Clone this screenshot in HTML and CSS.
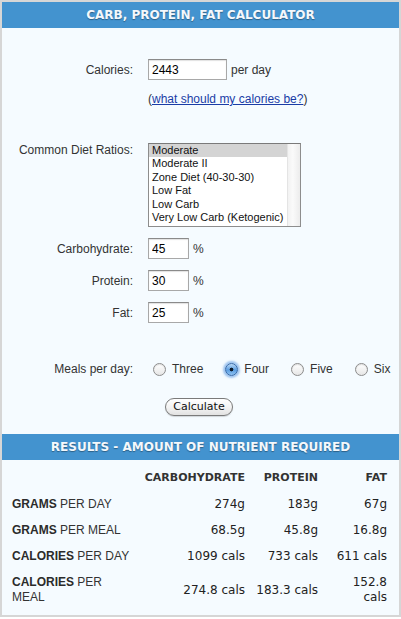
FILE: index.html
```html
<!DOCTYPE html>
<html>
<head>
<meta charset="utf-8">
<link rel="stylesheet" href="styles.css">
</head>
<body>
<div class="calc">
  <div class="bar">CARB, PROTEIN, FAT CALCULATOR</div>
  <div class="form">
    <div class="row r-cal">
      <label class="lbl">Calories:</label>
      <div class="ctl"><input class="txt w-cal" value="2443"><span class="unit">per day</span></div>
    </div>
    <div class="row r-link">
      <span class="lbl"></span>
      <div class="ctl">(<a href="#" class="link">what should my calories be?</a>)</div>
    </div>
    <div class="row r-diet">
      <label class="lbl">Common Diet Ratios:</label>
      <div class="listbox">
        <ul class="opts">
          <li class="sel">Moderate</li>
          <li>Moderate II</li>
          <li>Zone Diet (40-30-30)</li>
          <li>Low Fat</li>
          <li>Low Carb</li>
          <li>Very Low Carb (Ketogenic)</li>
        </ul>
        <div class="sbar"></div>
      </div>
    </div>
    <div class="row r-pct">
      <label class="lbl">Carbohydrate:</label>
      <div class="ctl"><input class="txt w-pct" value="45"><span class="unit">%</span></div>
    </div>
    <div class="row r-pct">
      <label class="lbl">Protein:</label>
      <div class="ctl"><input class="txt w-pct" value="30"><span class="unit">%</span></div>
    </div>
    <div class="row r-pct">
      <label class="lbl">Fat:</label>
      <div class="ctl"><input class="txt w-pct" value="25"><span class="unit">%</span></div>
    </div>
    <div class="row r-meals">
      <label class="lbl">Meals per day:</label>
      <div class="radios">
        <label class="opt"><input type="radio" name="m" class="rad"><span>Three</span></label>
        <label class="opt"><input type="radio" name="m" class="rad" checked><span>Four</span></label>
        <label class="opt"><input type="radio" name="m" class="rad"><span>Five</span></label>
        <label class="opt"><input type="radio" name="m" class="rad"><span>Six</span></label>
      </div>
    </div>
    <div class="btnrow"><button class="btn" type="button">Calculate</button></div>
  </div>
  <div class="bar">RESULTS - AMOUNT OF NUTRIENT REQUIRED</div>
  <div class="results">
    <div class="cell head"></div>
    <div class="cell head num">CARBOHYDRATE</div>
    <div class="cell head num">PROTEIN</div>
    <div class="cell head num">FAT</div>

    <div class="cell rl"><b>GRAMS</b> PER DAY</div>
    <div class="cell num v">274g</div>
    <div class="cell num v">183g</div>
    <div class="cell num v">67g</div>

    <div class="cell rl"><b>GRAMS</b> PER MEAL</div>
    <div class="cell num v">68.5g</div>
    <div class="cell num v">45.8g</div>
    <div class="cell num v">16.8g</div>

    <div class="cell rl"><b>CALORIES</b> PER DAY</div>
    <div class="cell num v">1099 cals</div>
    <div class="cell num v">733 cals</div>
    <div class="cell num v">611 cals</div>

    <div class="cell rl two">
      <div><b>CALORIES</b> PER</div>
      <div>MEAL</div>
    </div>
    <div class="cell num v two">274.8 cals</div>
    <div class="cell num v two">183.3 cals</div>
    <div class="cell num v two">152.8 cals</div>
  </div>
</div>
</body>
</html>
```

FILE: styles.css
```css
html, body {
  margin: 0;
  padding: 0;
  background: #ffffff;
}

.calc {
  box-sizing: border-box;
  width: 401px;
  height: 617px;
  border: 2px solid #d6d6d6;
  background: #f5fbff;
  font-family: "Liberation Sans", Arial, sans-serif;
  font-size: 12px;
  color: #333333;
}

.bar {
  height: 26px;
  line-height: 26px;
  background: #4393cf;
  color: #f4f8fc;
  text-align: center;
  font-family: "DejaVu Sans", Verdana, sans-serif;
  font-weight: bold;
  font-size: 12px;
  text-shadow: 0 1px 1px rgba(0, 0, 0, 0.35);
}

.form {
  padding-top: 31px;
  padding-bottom: 18px;
}

.row {
  display: flex;
  align-items: center;
  gap: 15px;
}

.lbl {
  width: 131px;
  flex: none;
  text-align: right;
  line-height: 14px;
}

.ctl {
  display: flex;
  align-items: center;
  line-height: 14px;
}

.r-cal { height: 21px; }
.r-link { margin-top: 12px; height: 14px; }
.r-diet { margin-top: 37px; align-items: flex-start; }
.r-pct { margin-top: 11px; height: 21px; }
.r-meals { margin-top: 38px; height: 16px; }

.txt {
  box-sizing: border-box;
  height: 21px;
  margin: 0;
  padding: 0 3px;
  border: 1px solid #a8a8a8;
  border-top-color: #8a8a8a;
  box-shadow: inset 0 1px 1px rgba(0, 0, 0, 0.12);
  background: #ffffff;
  font-family: "Liberation Sans", Arial, sans-serif;
  font-size: 12px;
  color: #000000;
  outline: none;
}

.w-cal { width: 79px; }
.w-pct { width: 41px; }

.unit { margin-left: 4px; }

.link {
  color: #1a3ca6;
  text-decoration: underline;
}

.listbox {
  box-sizing: border-box;
  width: 153px;
  height: 84px;
  border: 1px solid #8d8d8d;
  border-top-color: #7a7a7a;
  background: #ffffff;
  display: flex;
}

.opts {
  list-style: none;
  margin: 0;
  padding: 0;
  flex: 1;
  font-size: 11px;
  line-height: 13.4px;
  color: #111111;
}

.opts li {
  padding-left: 3px;
  white-space: nowrap;
}

.opts li.sel {
  background: #d4d4d4;
}

.sbar {
  width: 12px;
  flex: none;
  background: linear-gradient(to right, #f2f2f2, #fafafa 40%, #ececec);
  border-left: 1px solid #e4e4e4;
}

.radios {
  display: flex;
  align-items: center;
  gap: 22px;
  padding-left: 5px;
}

.opt {
  display: flex;
  align-items: center;
  gap: 6px;
  line-height: 14px;
}

.rad {
  appearance: none;
  -webkit-appearance: none;
  box-sizing: border-box;
  width: 13px;
  height: 13px;
  margin: 0;
  border-radius: 50%;
  border: 1px solid #8c8c8c;
  background: linear-gradient(#ffffff, #e6e6e6);
  box-shadow: inset 0 1px 1px rgba(0, 0, 0, 0.12);
}

.rad:checked {
  border-color: #3166a8;
  background:
    radial-gradient(circle, #0d1a2a 0 1.6px, transparent 2.2px),
    linear-gradient(#b9d8f5, #5b9de0 55%, #8fc2f2);
  box-shadow: 0 0 2px 2px rgba(84, 150, 226, 0.55);
}

.btnrow {
  margin-top: 21px;
  display: flex;
  justify-content: center;
  padding-right: 3px;
}

.btn {
  box-sizing: border-box;
  width: 68px;
  height: 18px;
  margin: 0;
  padding: 0;
  border: 1px solid #7a7a7a;
  border-radius: 9px;
  background: linear-gradient(#ffffff, #f4f4f4 50%, #e2e2e2);
  box-shadow: 0 1px 1px rgba(0, 0, 0, 0.15);
  font-family: "DejaVu Sans", Verdana, sans-serif;
  font-size: 11px;
  line-height: 16px;
  color: #111111;
}

.results {
  margin-top: 6px;
  padding: 0 12px 0 10px;
  display: grid;
  grid-template-columns: 120px 104px 64px 60px;
  column-gap: 9px;
}

.cell {
  padding: 6px 0;
  line-height: 14px;
  white-space: nowrap;
}

.cell.head {
  padding: 5px 0 6px;
  font-family: "DejaVu Sans", Verdana, sans-serif;
  font-weight: bold;
  font-size: 11px;
  color: #333333;
}

.num { text-align: right; }

.rl {
  font-size: 12px;
  color: #333333;
}

.rl b { color: #2b2b2b; }

.v {
  font-family: "DejaVu Sans", Verdana, sans-serif;
  font-size: 12px;
  color: #222222;
}

.two {
  line-height: 15px;
  white-space: normal;
  display: flex;
  align-items: center;
  justify-content: flex-end;
}

.rl.two {
  display: block;
  padding-top: 6px;
}
```
